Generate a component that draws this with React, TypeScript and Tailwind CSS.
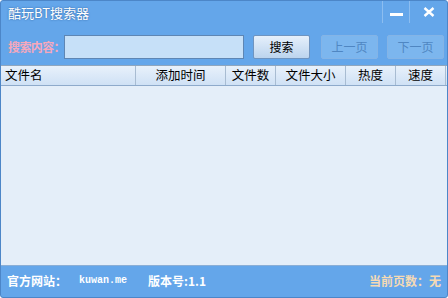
import React from "react";

const cjk = { fontFamily: '"Noto Sans CJK SC", "Noto Sans", sans-serif' };

const columns = [
  { label: "文件名", w: "w-[135px]", align: "justify-start pl-[4px]" },
  { label: "添加时间", w: "w-[90px]", align: "justify-center" },
  { label: "文件数", w: "w-[50px]", align: "justify-center" },
  { label: "文件大小", w: "w-[70px]", align: "justify-center" },
  { label: "热度", w: "w-[50px]", align: "justify-center" },
  { label: "速度", w: "w-[50px]", align: "justify-center" },
];

export default function App() {
  return (
    <div
      className="w-[448px] h-[298px] flex flex-col bg-[#64a6ea] border border-[#4c86c8] rounded-[3px] overflow-hidden text-[12px] text-black"
      style={cjk}
    >
      {/* title bar */}
      <div className="h-[27px] flex items-start">
        <span className="pl-[7px] pt-[4px] text-[13px] leading-[16px] text-white [text-shadow:0_0_2px_#2a5c98]">
          酷玩BT搜索器
        </span>
        <div className="ml-auto flex h-[22px]">
          <div className="w-[27px] border-l border-[#8cbdf0] flex items-center justify-center">
            <div className="w-[13px] h-[3px] bg-white mt-[4px]" />
          </div>
          <div className="w-[38px] border-l border-[#8cbdf0] flex items-center justify-center">
            <svg width="12" height="10" viewBox="0 0 12 10">
              <path d="M1.5 1 L10.5 9 M10.5 1 L1.5 9" stroke="white" strokeWidth="2.4" />
            </svg>
          </div>
        </div>
      </div>

      {/* search row */}
      <div className="h-[37px] flex items-start pt-[7px] pl-[7px]">
        <span className="shrink-0 w-[56px] whitespace-nowrap text-[12px] leading-[24px] font-bold text-[#f6a8bc] tracking-[-0.6px]">
          搜索内容：
        </span>
        <input className="shrink-0 w-[180px] h-[24px] bg-[#c6e0f8] border border-[#5e86b4] outline-none" />
        <button className="shrink-0 ml-[9px] w-[57px] h-[24px] rounded-[2px] border border-[#6f94c0] bg-gradient-to-b from-[#e6f0fb] to-[#bcd4ee] text-[12px] text-black">
          搜索
        </button>
        <button className="shrink-0 ml-[11px] w-[57px] h-[24px] rounded-[2px] border border-[#84b4e6] bg-[#7cb6ee] text-[12px] text-[#4f86c2]">
          上一页
        </button>
        <button className="shrink-0 ml-[9px] w-[57px] h-[24px] rounded-[2px] border border-[#84b4e6] bg-[#7cb6ee] text-[12px] text-[#4f86c2]">
          下一页
        </button>
      </div>

      {/* list */}
      <div className="flex-1 flex flex-col bg-[#e4eef9] border-t border-[#8fa6be]">
        <div className="h-[20px] flex bg-gradient-to-b from-[#e8f1fb] to-[#cfe1f5] border-b border-[#8eaacb]">
          {columns.map((c) => (
            <div
              key={c.label}
              className={`${c.w} flex items-center ${c.align} border-r border-[#a8bcd2] text-[12.5px] leading-none`}
            >
              {c.label}
            </div>
          ))}
        </div>
      </div>

      {/* footer */}
      <div className="h-[32px] flex items-center px-[6px] pb-[2px] border-t border-[#8aaed6] text-white font-bold text-[12px]">
        <span>官方网站：</span>
        <span className="ml-[12px] text-[10px]" style={{ fontFamily: '"Liberation Mono", monospace' }}>
          kuwan.me
        </span>
        <span className="ml-[21px]">版本号:1.1</span>
        <span className="ml-auto text-[#f5dab4]">当前页数：无</span>
      </div>
    </div>
  );
}
